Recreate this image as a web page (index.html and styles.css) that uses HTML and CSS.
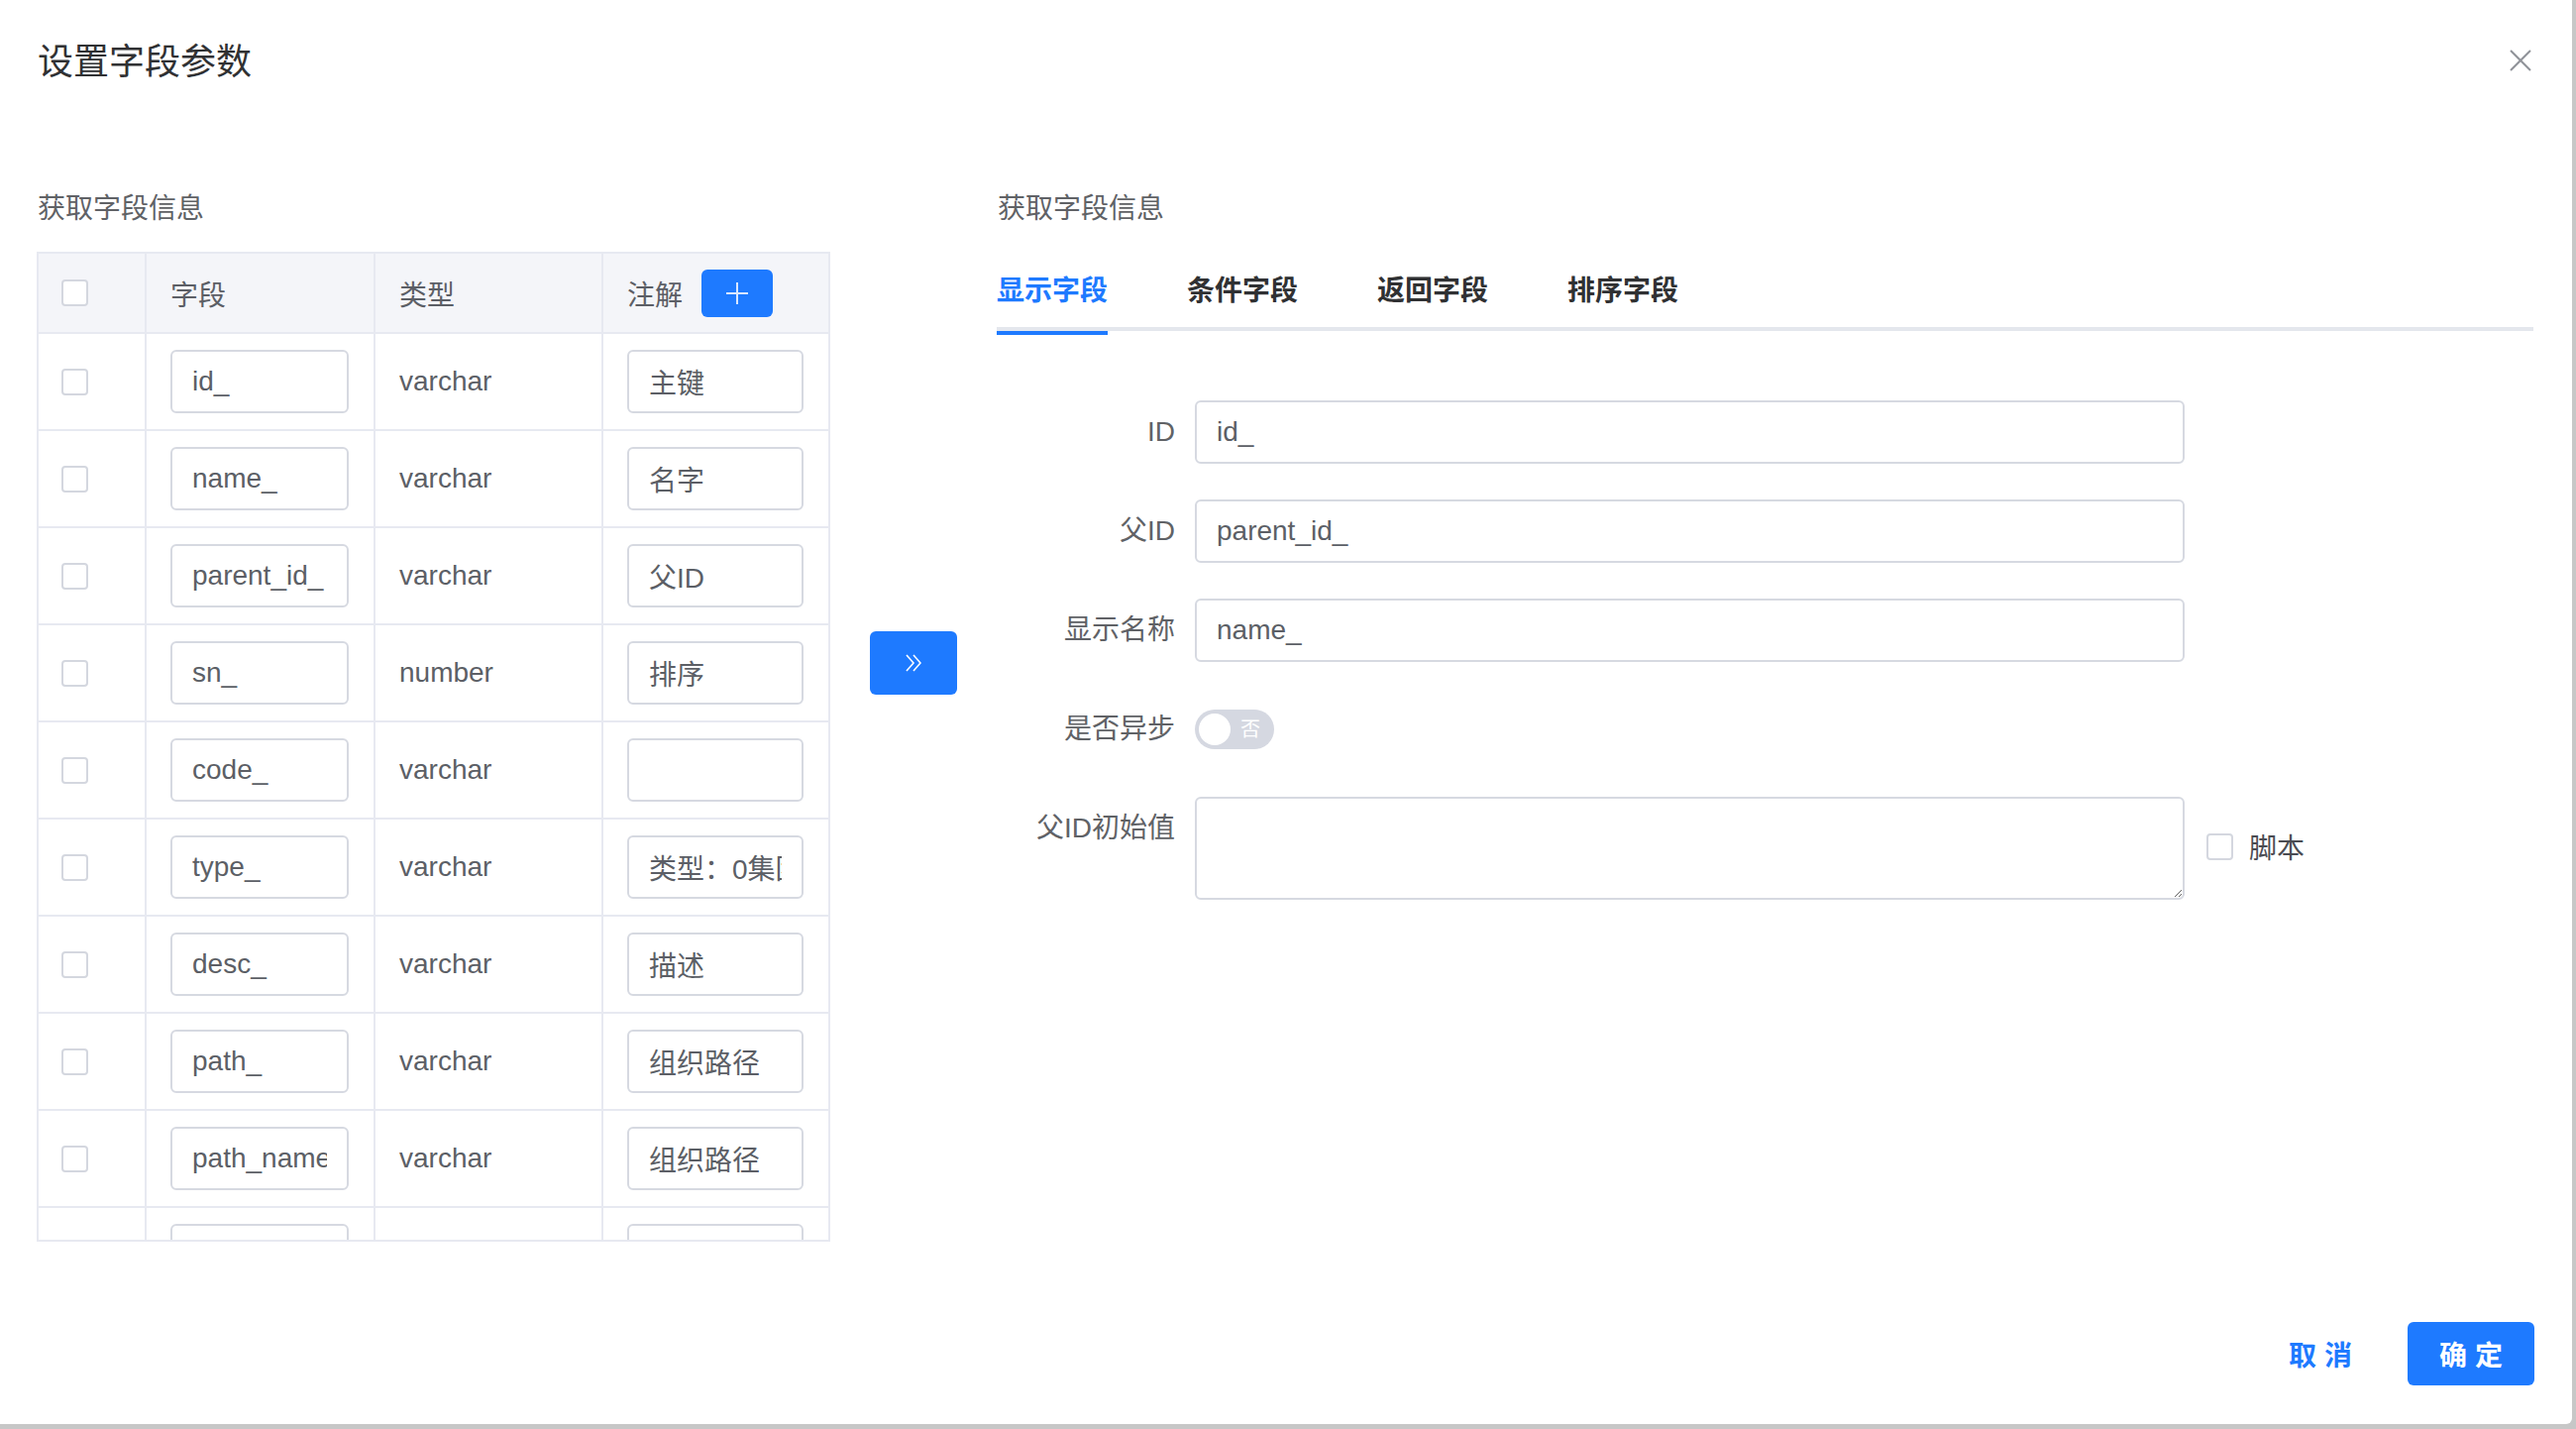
FILE: index.html
```html
<!DOCTYPE html>
<html lang="zh-CN">
<head>
<meta charset="utf-8">
<title>设置字段参数</title>
<link rel="stylesheet" href="styles.css">
</head>
<body>
<div class="dialog">
  <div class="dialog-header">
    <span class="dialog-title">设置字段参数</span>
    <svg class="close-icon" width="22" height="22" viewBox="0 0 22 22"><path d="M1 1 L21 21 M21 1 L1 21" stroke="#909399" stroke-width="2" fill="none"/></svg>
  </div>
  <div class="dialog-body">
    <div class="left-panel">
      <div class="section-label">获取字段信息</div>
      <div class="table">
        <div class="row head">
          <div class="cell"><span class="checkbox"></span></div>
          <div class="cell">字段</div>
          <div class="cell">类型</div>
          <div class="cell">注解<button class="add-btn"><svg width="22" height="22" viewBox="0 0 22 22"><path d="M11 0 V22 M0 11 H22" stroke="#d9e7ff" stroke-width="2"/></svg></button></div>
        </div>
        <div class="table-body">
          <div class="row">
            <div class="cell"><span class="checkbox"></span></div>
            <div class="cell"><input class="cell-input" value="id_"></div>
            <div class="cell">varchar</div>
            <div class="cell"><input class="cell-input" value="主键"></div>
          </div>
          <div class="row">
            <div class="cell"><span class="checkbox"></span></div>
            <div class="cell"><input class="cell-input" value="name_"></div>
            <div class="cell">varchar</div>
            <div class="cell"><input class="cell-input" value="名字"></div>
          </div>
          <div class="row">
            <div class="cell"><span class="checkbox"></span></div>
            <div class="cell"><input class="cell-input" value="parent_id_"></div>
            <div class="cell">varchar</div>
            <div class="cell"><input class="cell-input" value="父ID"></div>
          </div>
          <div class="row">
            <div class="cell"><span class="checkbox"></span></div>
            <div class="cell"><input class="cell-input" value="sn_"></div>
            <div class="cell">number</div>
            <div class="cell"><input class="cell-input" value="排序"></div>
          </div>
          <div class="row">
            <div class="cell"><span class="checkbox"></span></div>
            <div class="cell"><input class="cell-input" value="code_"></div>
            <div class="cell">varchar</div>
            <div class="cell"><input class="cell-input" value=""></div>
          </div>
          <div class="row">
            <div class="cell"><span class="checkbox"></span></div>
            <div class="cell"><input class="cell-input" value="type_"></div>
            <div class="cell">varchar</div>
            <div class="cell"><input class="cell-input" value="类型：0集团，1公司，2部门"></div>
          </div>
          <div class="row">
            <div class="cell"><span class="checkbox"></span></div>
            <div class="cell"><input class="cell-input" value="desc_"></div>
            <div class="cell">varchar</div>
            <div class="cell"><input class="cell-input" value="描述"></div>
          </div>
          <div class="row">
            <div class="cell"><span class="checkbox"></span></div>
            <div class="cell"><input class="cell-input" value="path_"></div>
            <div class="cell">varchar</div>
            <div class="cell"><input class="cell-input" value="组织路径"></div>
          </div>
          <div class="row">
            <div class="cell"><span class="checkbox"></span></div>
            <div class="cell"><input class="cell-input" value="path_name_"></div>
            <div class="cell">varchar</div>
            <div class="cell"><input class="cell-input" value="组织路径"></div>
          </div>
          <div class="row">
            <div class="cell"><span class="checkbox"></span></div>
            <div class="cell"><input class="cell-input" value=""></div>
            <div class="cell"></div>
            <div class="cell"><input class="cell-input" value=""></div>
          </div>
        </div>
      </div>
    </div>

    <button class="move-btn"><svg width="16" height="18" viewBox="0 0 16 18"><path d="M1 1 L8 9 L1 17 M8 1 L15 9 L8 17" stroke="#ffffff" stroke-width="1.6" fill="none"/></svg></button>

    <div class="right-panel">
      <div class="section-label">获取字段信息</div>
      <div class="tabs">
        <div class="tab active">显示字段</div>
        <div class="tab">条件字段</div>
        <div class="tab">返回字段</div>
        <div class="tab">排序字段</div>
      </div>
      <div class="form">
        <div class="form-item">
          <label class="form-label">ID</label>
          <input class="form-input" value="id_">
        </div>
        <div class="form-item">
          <label class="form-label">父ID</label>
          <input class="form-input" value="parent_id_">
        </div>
        <div class="form-item">
          <label class="form-label">显示名称</label>
          <input class="form-input" value="name_">
        </div>
        <div class="form-item">
          <label class="form-label">是否异步</label>
          <div class="switch-wrap">
            <span class="switch"><span class="switch-knob"></span><span class="switch-text">否</span></span>
          </div>
        </div>
        <div class="form-item textarea-item">
          <label class="form-label">父ID初始值</label>
          <textarea class="form-textarea"></textarea>
          <span class="script-check"><span class="checkbox"></span><span class="script-label">脚本</span></span>
        </div>
      </div>
    </div>
  </div>
  <div class="dialog-footer">
    <button class="btn btn-text">取 消</button>
    <button class="btn btn-primary">确 定</button>
  </div>
</div>
</body>
</html>
```

FILE: styles.css
```css
* {
  box-sizing: border-box;
}

html, body {
  margin: 0;
  padding: 0;
}

body {
  background: #c7c7c7;
  font-family: "Liberation Sans", "Noto Sans CJK SC", sans-serif;
  font-size: 28px;
  color: #606266;
  width: 2600px;
  height: 1442px;
  overflow: hidden;
}

.dialog {
  width: 2596px;
  height: 1437px;
  background: #ffffff;
  border-radius: 0 0 6px 0;
  display: flex;
  flex-direction: column;
}

.dialog-header {
  display: flex;
  align-items: center;
  justify-content: space-between;
  padding: 39px 41px 0 38px;
}

.dialog-title {
  font-size: 36px;
  line-height: 48px;
  color: #303133;
}

.close-icon {
  display: block;
  margin-top: -5px;
}

.dialog-body {
  display: flex;
  align-items: flex-start;
  gap: 40px;
  padding: 104px 38px 0 37px;
}

.section-label {
  font-size: 28px;
  line-height: 40px;
  color: #606266;
  margin-bottom: 23px;
  padding-left: 1px;
}

.left-panel {
  width: 801px;
  flex: none;
}

.table {
  border: 2px solid #e7e9f1;
  width: 801px;
}

.row {
  display: grid;
  grid-template-columns: 109px 231px 230px 1fr;
  height: 98px;
  border-bottom: 2px solid #e7e9f1;
}

.row.head {
  height: 81px;
  background: #f4f5f9;
}

.cell {
  display: flex;
  align-items: center;
  padding-left: 24px;
  border-right: 2px solid #e7e9f1;
  color: #5c5f66;
  white-space: nowrap;
  overflow: hidden;
}

.cell:first-child {
  padding-left: 23px;
}

.cell:last-child {
  border-right: none;
}

.table-body {
  height: 914px;
  overflow: hidden;
}

.checkbox {
  display: inline-block;
  width: 27px;
  height: 27px;
  border: 2px solid #d4d7df;
  border-radius: 4px;
  background: #ffffff;
  flex: none;
}

.add-btn {
  margin-left: 19px;
  width: 72px;
  height: 48px;
  border: none;
  border-radius: 6px;
  background: #1e7aff;
  display: flex;
  align-items: center;
  justify-content: center;
  padding: 0;
}

.add-btn svg {
  display: block;
}

.cell-input {
  width: 180px;
  height: 64px;
  border: 2px solid #d6d9e1;
  border-radius: 6px;
  padding: 0 20px;
  font: inherit;
  font-size: 28px;
  color: #5c5f66;
  background: #ffffff;
  outline: none;
}

.cell:last-child .cell-input {
  width: 178px;
}

.move-btn {
  flex: none;
  width: 88px;
  height: 64px;
  margin-top: 446px;
  border: none;
  border-radius: 6px;
  background: #1e7aff;
  display: flex;
  align-items: center;
  justify-content: center;
  padding: 0;
}

.move-btn svg {
  display: block;
}

.right-panel {
  flex: 1;
  min-width: 0;
}

.tabs {
  display: flex;
  height: 80px;
  border-bottom: 4px solid #e4e7ed;
  margin-right: 1px;
}

.tab {
  height: 80px;
  line-height: 80px;
  padding: 0 40px;
  font-size: 28px;
  font-weight: 600;
  color: #303133;
}

.tab:first-child {
  padding-left: 0;
}

.tab.active {
  color: #1e7aff;
  box-shadow: inset 0 -4px 0 #1e7aff;
  margin-bottom: -4px;
  height: 84px;
}

.tab.active:first-child {
  padding-right: 0;
  margin-right: 40px;
}

.form {
  padding-top: 70px;
}

.form-item {
  display: flex;
  align-items: flex-start;
  margin-bottom: 36px;
}

.form-label {
  width: 200px;
  flex: none;
  text-align: right;
  padding-right: 20px;
  line-height: 64px;
  font-size: 28px;
  color: #606266;
}

.form-input {
  width: 999px;
  height: 64px;
  border: 2px solid #d6d9e1;
  border-radius: 6px;
  padding: 0 20px;
  font: inherit;
  font-size: 28px;
  color: #5c5f66;
  background: #ffffff;
  outline: none;
}

.switch-wrap {
  height: 64px;
  display: flex;
  align-items: center;
}

.switch {
  width: 80px;
  height: 40px;
  border-radius: 20px;
  background: #d5d8e1;
  display: flex;
  align-items: center;
  padding-left: 4px;
}

.switch-knob {
  width: 32px;
  height: 32px;
  border-radius: 50%;
  background: #ffffff;
  flex: none;
}

.switch-text {
  margin-left: 10px;
  font-size: 20px;
  line-height: 20px;
  color: #ffffff;
}

.textarea-item {
  align-items: center;
}

.textarea-item .form-label {
  align-self: flex-start;
}

.form-textarea {
  width: 999px;
  height: 104px;
  border: 2px solid #d6d9e1;
  border-radius: 6px;
  padding: 10px 20px;
  font: inherit;
  font-size: 28px;
  color: #5c5f66;
  resize: vertical;
  outline: none;
  display: block;
}

.script-check {
  display: flex;
  align-items: center;
  margin-left: 22px;
  margin-top: -4px;
}

.script-label {
  margin-left: 16px;
  font-size: 28px;
  color: #4a4c52;
}

.dialog-footer {
  margin-top: auto;
  display: flex;
  justify-content: flex-end;
  gap: 20px;
  padding: 0 38px 39px 0;
}

.btn {
  width: 128px;
  height: 64px;
  border: none;
  border-radius: 6px;
  font-family: "Liberation Sans", "Noto Sans CJK SC", sans-serif;
  font-size: 28px;
  padding: 0;
}

.btn-text {
  background: transparent;
  color: #1e7aff;
  font-weight: 600;
  margin-right: 4px;
}

.btn-primary {
  background: #1e7aff;
  color: #ffffff;
  font-weight: 600;
}
```
